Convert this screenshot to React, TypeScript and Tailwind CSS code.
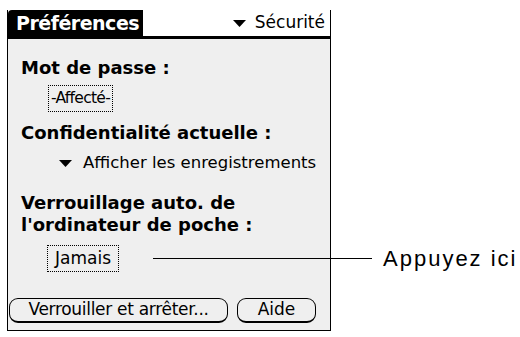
export default function App() {
  return (
    <div className="relative h-[337px] w-[520px] overflow-hidden bg-white font-['DejaVu_Sans',sans-serif] text-black">
      <div className="ml-[7px] mt-[10px] flex h-[321px] w-[324px] flex-col border-x border-b border-black bg-[#efefef]">
        {/* header */}
        <div className="flex h-[29px] items-stretch border-b-[3px] border-black bg-white">
          <div className="flex w-[135px] items-center rounded-tl-[4px] bg-black pl-[8px] text-[19px] font-bold tracking-[-0.5px] text-white">
            Préférences
          </div>
          <div className="flex flex-1 items-center justify-end gap-[9px] pr-[5px] text-[17px]">
            <svg className="shrink-0" width="13" height="7" viewBox="0 0 13 7">
              <polygon points="0,0 13,0 6.5,7" fill="black" />
            </svg>
            <span>Sécurité</span>
          </div>
        </div>

        <div className="flex flex-1 flex-col px-[13px]">
          <div className="mt-[18px] text-[18px] font-bold leading-[22px]">Mot de passe :</div>
          <div className="ml-[27px] mt-[6px] flex h-[27px] w-[65px] items-center justify-center whitespace-nowrap border border-dotted border-black text-[15.5px] tracking-[-0.7px]">
            -Affecté-
          </div>
          <div className="mt-[10px] whitespace-nowrap text-[18px] font-bold leading-[22px]">
            Confidentialité actuelle :
          </div>
          <div className="ml-[38px] mt-[8px] flex items-center gap-[11px] whitespace-nowrap text-[16.5px] leading-[22px]">
            <svg className="shrink-0" width="13" height="7" viewBox="0 0 13 7">
              <polygon points="0,0 13,0 6.5,7" fill="black" />
            </svg>
            <span>Afficher les enregistrements</span>
          </div>
          <div className="mt-[18px] text-[18px] font-bold leading-[22px]">
            Verrouillage auto. de
            <br />
            l'ordinateur de poche :
          </div>
          <div className="ml-[26px] mt-[9px] flex h-[27px] w-[72px] items-center justify-center border border-dotted border-black text-[17px]">
            Jamais
          </div>

          <div className="-mx-[12px] mt-auto mb-[7px] flex gap-[9px] text-[17px]">
            <div className="flex h-[25px] w-[219px] items-center justify-center whitespace-nowrap rounded-[9px] border border-b-2 border-black tracking-[-0.3px]">
              Verrouiller et arrêter...
            </div>
            <div className="flex h-[25px] w-[79px] items-center justify-center rounded-[9px] border border-b-2 border-black">
              Aide
            </div>
          </div>
        </div>
      </div>

      {/* callout */}
      <div className="absolute left-[153px] top-[245px] flex h-[26px] items-center">
        <div className="h-px w-[219px] bg-black" />
        <span className="ml-[11px] font-['Liberation_Sans',sans-serif] text-[22px] tracking-[2px]">
          Appuyez ici
        </span>
      </div>
    </div>
  );
}
